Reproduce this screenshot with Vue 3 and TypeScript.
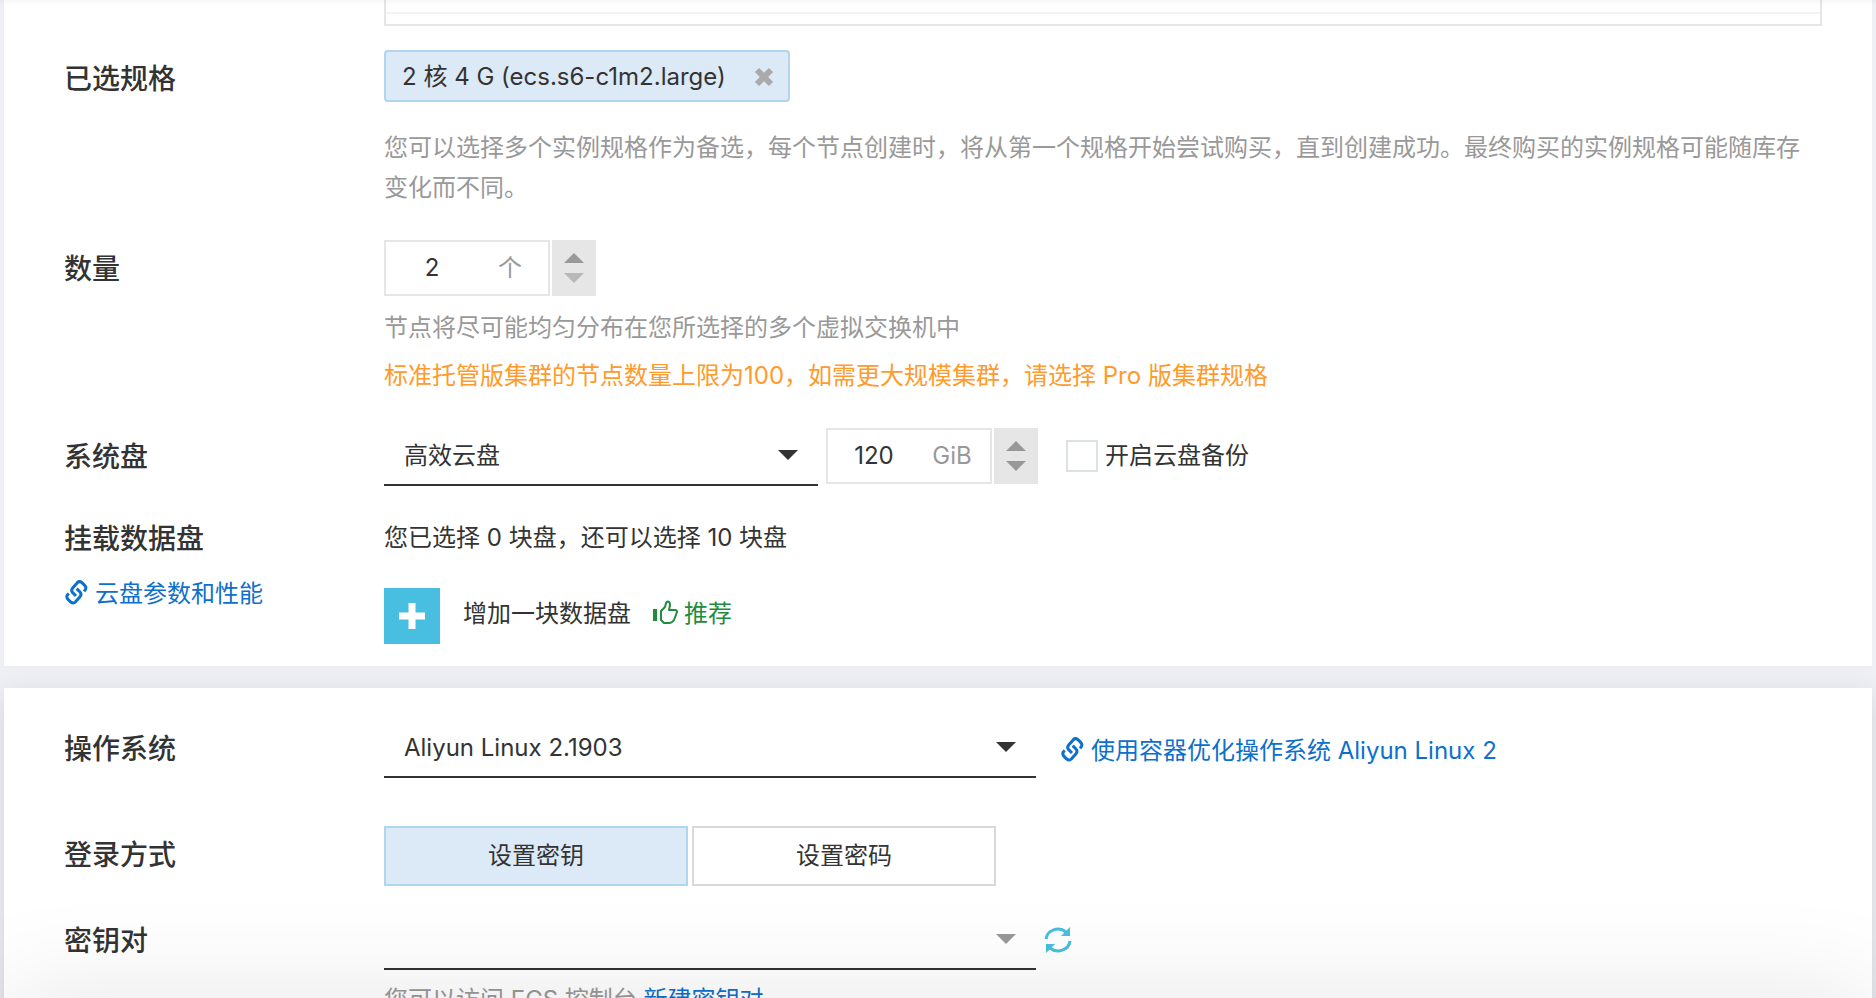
<script setup lang="ts">
import { ref } from 'vue'

const count = ref('2')
const diskSize = ref('120')
const diskType = ref('高效云盘')
const backup = ref(false)
const os = ref('Aliyun Linux 2.1903')
const keyPair = ref('')
const login = ref('设置密钥')
const loginOptions: string[] = ['设置密钥', '设置密码']

function step(value: string, by: number): string {
  return String(Math.max(0, Number(value) + by))
}
</script>

<template>
  <main class="page">
    <section class="card">
      <div class="spec-table"></div>

      <div class="row">
        <div class="label">已选规格</div>
        <div>
          <span class="tag">
            2 核 4 G (ecs.s6-c1m2.large)
            <button class="plain" type="button" aria-label="移除">
              <svg width="20" height="20" viewBox="0 0 20 20"><path d="M3 3 17 17M17 3 3 17" stroke="#aaa" stroke-width="6" /></svg>
            </button>
          </span>
          <p class="hint desc">您可以选择多个实例规格作为备选，每个节点创建时，将从第一个规格开始尝试购买，直到创建成功。最终购买的实例规格可能随库存变化而不同。</p>
        </div>
      </div>

      <div class="row">
        <label class="label" for="count">数量</label>
        <div>
          <div class="number">
            <div class="number-box">
              <input id="count" v-model="count" type="text" inputmode="numeric" />
              <span class="unit">个</span>
            </div>
            <div class="spinner">
              <button class="plain" type="button" aria-label="增加数量" @click="count = step(count, 1)"><i class="up"></i></button>
              <button class="plain" type="button" aria-label="减少数量" @click="count = step(count, -1)"><i class="down faded"></i></button>
            </div>
          </div>
          <p class="hint count-hint">节点将尽可能均匀分布在您所选择的多个虚拟交换机中</p>
          <p class="hint warn">标准托管版集群的节点数量上限为100，如需更大规模集群，请选择 Pro 版集群规格</p>
        </div>
      </div>

      <div class="row">
        <label class="label" for="disk">系统盘</label>
        <div class="line">
          <div class="select disk-select">
            <select id="disk" v-model="diskType"><option>高效云盘</option></select>
          </div>
          <div class="number disk-size">
            <div class="number-box">
              <input v-model="diskSize" type="text" inputmode="numeric" aria-label="系统盘容量" />
              <span class="unit">GiB</span>
            </div>
            <div class="spinner">
              <button class="plain" type="button" aria-label="增加容量" @click="diskSize = step(diskSize, 10)"><i class="up"></i></button>
              <button class="plain" type="button" aria-label="减少容量" @click="diskSize = step(diskSize, -10)"><i class="down"></i></button>
            </div>
          </div>
          <label class="check"><input v-model="backup" type="checkbox" />开启云盘备份</label>
        </div>
      </div>

      <div class="row data-row">
        <div>
          <div class="label">挂载数据盘</div>
          <a class="link side-link" href="#">
            <svg width="24" height="28" viewBox="-4 0 72 84"><path d="M32 48 22 38Q16 31 22 24L36 8Q42 2 50 8L58 16Q64 22 60 29L56 34M34 26 44 36Q50 43 44 50L30 66Q24 72 16 66L8 58Q2 52 6 45L10 40" /></svg>
            云盘参数和性能
          </a>
        </div>
        <div>
          <p class="summary">您已选择 0 块盘，还可以选择 10 块盘</p>
          <div class="add">
            <button class="plain add-button" type="button" aria-label="增加一块数据盘">
              <svg width="26" height="26" viewBox="0 0 26 26"><path d="M13 0V26M0 13H26" stroke="#fff" stroke-width="7" /></svg>
            </button>
            <span>增加一块数据盘</span>
            <span class="recommend">
              <svg width="26" height="28" viewBox="0 0 26 28"><path d="M3 9V21" stroke-width="4" /><path d="M9 11 13 7 14 3Q15 1 17 2Q18 3 18 5L17 10H23Q25 10 25 12L22 20Q20 23 17 23H12L9 20Z" stroke-width="2" stroke-linejoin="round" /></svg>
              推荐
            </span>
          </div>
        </div>
      </div>
    </section>

    <section class="card lower">
      <div class="row">
        <label class="label" for="os">操作系统</label>
        <div class="line">
          <div class="select wide-select">
            <select id="os" v-model="os"><option>Aliyun Linux 2.1903</option></select>
          </div>
          <a class="link os-link" href="#">
            <svg width="24" height="28" viewBox="-4 0 72 84"><path d="M32 48 22 38Q16 31 22 24L36 8Q42 2 50 8L58 16Q64 22 60 29L56 34M34 26 44 36Q50 43 44 50L30 66Q24 72 16 66L8 58Q2 52 6 45L10 40" /></svg>
            使用容器优化操作系统 Aliyun Linux 2
          </a>
        </div>
      </div>

      <div class="row login-row">
        <div class="label">登录方式</div>
        <div class="tabs">
          <button
            v-for="option in loginOptions"
            :key="option"
            class="tab"
            :class="{ active: option === login }"
            type="button"
            @click="login = option"
          >{{ option }}</button>
        </div>
      </div>

      <div class="row key-row">
        <label class="label" for="key">密钥对</label>
        <div>
          <div class="line">
            <div class="select wide-select empty">
              <select id="key" v-model="keyPair"><option value=""></option></select>
            </div>
            <button class="plain refresh" type="button" aria-label="刷新">
              <svg width="28" height="28" viewBox="0 0 28 28">
                <path d="M2 13A12 11 0 0 1 22 6M26 15A12 11 0 0 1 6 22" fill="none" stroke="#48bfe0" stroke-width="3" />
                <path d="M26 1V10H17ZM2 27V18H11Z" fill="#48bfe0" />
              </svg>
            </button>
          </div>
          <p class="hint key-hint">您可以访问 ECS 控制台 <a class="link-text" href="#">新建密钥对</a></p>
        </div>
      </div>
    </section>
    <div class="top-shade"></div>
    <div class="bottom-shade"></div>
  </main>
</template>

<style>
body {
  margin: 0;
}
</style>

<style scoped>
* {
  box-sizing: border-box;
}
.page {
  position: relative;
  height: 100vh;
  overflow: hidden;
  padding: 0 4px;
  background: #eff0f5;
  color: #333;
  font: 24px/40px Inter, "Noto Sans CJK SC", sans-serif;
}
p {
  margin: 0;
}
input,
select,
button {
  font: inherit;
  color: inherit;
}
.card {
  padding: 0 50px 22px 60px;
  background: #fff;
  box-shadow: 0 2px 2px #ededee;
}
.lower {
  margin-top: 22px;
  padding-top: 32px;
  position: relative;
  box-shadow: 0 8px 28px rgba(20, 20, 40, 0.13);
}
.spec-table {
  height: 26px;
  margin: 0 0 24px 320px;
  border: 2px solid #e6e6e6;
  border-top: 0;
  background: linear-gradient(#f3f3f3, #f3f3f3) 0 12px / 100% 2px no-repeat;
}
.row {
  display: grid;
  grid-template-columns: 320px 1fr;
}
.row + .row {
  margin-top: 32px;
}
.label {
  display: block;
  font-size: 28px;
  font-weight: 500;
  line-height: 58px;
}
.plain {
  display: flex;
  align-items: center;
  justify-content: center;
  padding: 0;
  border: 0;
  background: none;
}
.tag {
  display: inline-flex;
  align-items: center;
  gap: 28px;
  height: 52px;
  padding: 2px 14px 0 16px;
  border: 2px solid #b0d5ed;
  border-radius: 4px;
  background: #dce9f7;
  vertical-align: top;
}
.hint {
  color: #999;
}
.desc {
  margin-top: 26px;
}
.count-hint {
  margin-top: 12px;
}
.warn {
  margin-top: 8px;
  color: #ff9a2b;
}
.number {
  display: flex;
  gap: 2px;
}
.number-box {
  display: flex;
  align-items: center;
  width: 166px;
  height: 56px;
  padding: 0 8px;
  border: 2px solid #e6e6e6;
  color: #999;
}
.number-box input {
  width: 76px;
  padding: 0;
  border: 0;
  background: none;
  color: #333;
  text-align: center;
}
.unit {
  flex: 1;
  padding-left: 10px;
  text-align: center;
}
.spinner {
  display: flex;
  flex-direction: column;
  justify-content: center;
  width: 44px;
  background: #e6e6e6;
}
.spinner .plain {
  height: 20px;
}
.up,
.down {
  border: 10px solid transparent;
}
.up {
  border-top: 0;
  border-bottom-color: #999;
}
.down {
  border-bottom: 0;
  border-top-color: #999;
}
.down.faded {
  border-top-color: #b8b8b8;
}
.line {
  display: flex;
}
.select {
  position: relative;
}
.select::after {
  content: "";
  position: absolute;
  right: 20px;
  top: 22px;
  border: 10px solid transparent;
  border-top-color: #333;
  border-bottom: 0;
  pointer-events: none;
}
.select.empty::after {
  border-top-color: #999;
}
.select select {
  display: block;
  appearance: none;
  width: 100%;
  height: 58px;
  padding: 0 48px 0 20px;
  border: 0;
  border-bottom: 2px solid #333;
  border-radius: 0;
  background: none;
}
.disk-select {
  width: 434px;
}
.wide-select {
  width: 652px;
}
.disk-size {
  height: 56px;
  margin-left: 8px;
}
.check {
  display: flex;
  align-items: center;
  gap: 7px;
  height: 56px;
  margin-left: 28px;
}
.check input {
  appearance: none;
  width: 32px;
  height: 32px;
  margin: 0;
  border: 2px solid #dde2e2;
}
.row.data-row {
  margin-top: 24px;
}
.summary {
  line-height: 56px;
}
.link {
  display: flex;
  align-items: center;
  gap: 7px;
  color: #0d70cc;
  text-decoration: none;
}
.link path {
  fill: none;
  stroke: currentColor;
  stroke-width: 9;
}
.side-link {
  margin-top: 6px;
}
.add {
  display: flex;
  margin-top: 22px;
  line-height: 52px;
}
.add-button {
  width: 56px;
  height: 56px;
  margin-right: 23px;
  background: #48bfe0;
}
.recommend {
  display: flex;
  align-items: center;
  gap: 6px;
  height: 52px;
  margin-left: 21px;
  color: #218c3b;
}
.recommend path {
  fill: none;
  stroke: currentColor;
}
.os-link {
  margin-left: 24px;
  padding-top: 4px;
}
.row.login-row {
  margin-top: 48px;
}
.tabs {
  display: flex;
  gap: 4px;
}
.tab {
  width: 304px;
  height: 60px;
  padding: 0;
  border: 2px solid #d9d9d9;
  background: #fff;
}
.tab.active {
  border-color: #b0d5ed;
  background: #dce9f7;
}
.row.key-row {
  margin-top: 26px;
}
.refresh {
  margin-left: 8px;
  height: 56px;
}
.key-hint {
  margin-top: 10px;
}
.link-text {
  color: #0d70cc;
  text-decoration: none;
}
.top-shade {
  position: absolute;
  inset: 0 0 auto;
  height: 6px;
  background: linear-gradient(rgba(0, 0, 0, 0.03), transparent);
  pointer-events: none;
}
.bottom-shade {
  position: absolute;
  top: 100%;
  left: 0;
  right: 0;
  height: 160px;
  box-shadow: 0 0 110px rgba(0, 0, 0, 0.1);
  pointer-events: none;
}
</style>
